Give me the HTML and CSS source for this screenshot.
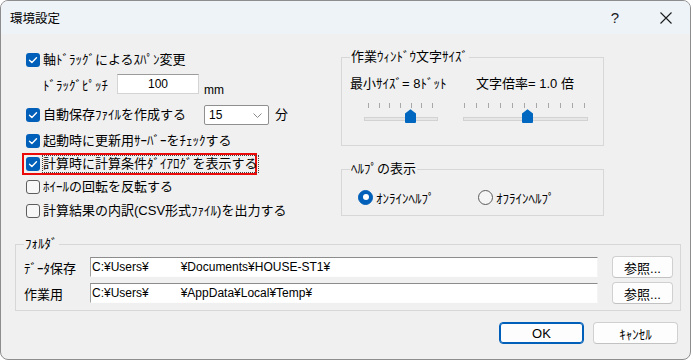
FILE: index.html
```html
<!DOCTYPE html>
<html>
    <head>
        <meta charset="utf-8">
        <link rel="stylesheet" href="styles.css">
    </head>
    <body>
        <div class="dialog">
            <div class="titlebar">
                <span class="title">環境設定</span>
                <span class="help">?</span>
                <span class="close">
                    <svg width="12" height="12" viewBox="0 0 12 12"><path d="M0.5 0.5L11.5 11.5M11.5 0.5L0.5 11.5" stroke="#1b1b1b" stroke-width="1.1" fill="none"/></svg>
                </span>
            </div>
            <div class="content">
                <div class="top">
                    <div class="options">
                        <div class="opt">
                            <span class="check on"><svg width="14" height="14" viewBox="0 0 14 14"><path d="M3.5 7.2L5.9 9.6L10.5 4.8" stroke="#fff" stroke-width="1.4" fill="none" stroke-linecap="round" stroke-linejoin="round"/></svg></span>
                            <span>軸ﾄﾞﾗｯｸﾞによるｽﾊﾟﾝ変更</span>
                        </div>
                        <div class="pitch">
                            <span class="pitch-label">ﾄﾞﾗｯｸﾞﾋﾟｯﾁ</span>
                            <span class="edit num">100</span>
                            <span class="unit">mm</span>
                        </div>
                        <div class="opt autosave">
                            <span class="check on"><svg width="14" height="14" viewBox="0 0 14 14"><path d="M3.5 7.2L5.9 9.6L10.5 4.8" stroke="#fff" stroke-width="1.4" fill="none" stroke-linecap="round" stroke-linejoin="round"/></svg></span>
                            <span class="autosave-label">自動保存ﾌｧｲﾙを作成する</span>
                            <span class="combo">15<svg width="9" height="5" viewBox="0 0 9 5"><path d="M0.5 0.5L4.5 4.5L8.5 0.5" stroke="#8a8a8a" fill="none"/></svg></span>
                            <span class="minutes">分</span>
                        </div>
                        <div class="opt update">
                            <span class="check on"><svg width="14" height="14" viewBox="0 0 14 14"><path d="M3.5 7.2L5.9 9.6L10.5 4.8" stroke="#fff" stroke-width="1.4" fill="none" stroke-linecap="round" stroke-linejoin="round"/></svg></span>
                            <span>起動時に更新用ｻｰﾊﾞｰをﾁｪｯｸする</span>
                        </div>
                        <div class="opt highlight">
                            <span class="check on"><svg width="14" height="14" viewBox="0 0 14 14"><path d="M3.5 7.2L5.9 9.6L10.5 4.8" stroke="#fff" stroke-width="1.4" fill="none" stroke-linecap="round" stroke-linejoin="round"/></svg></span>
                            <span class="focus">計算時に計算条件ﾀﾞｲｱﾛｸﾞを表示する</span>
                        </div>
                        <div class="opt wheel">
                            <span class="check"></span>
                            <span>ﾎｲｰﾙの回転を反転する</span>
                        </div>
                        <div class="opt csv">
                            <span class="check"></span>
                            <span>計算結果の内訳(CSV形式ﾌｧｲﾙ)を出力する</span>
                        </div>
                    </div>

                    <div class="side">
                        <fieldset class="group sizes">
                            <legend>作業ｳｨﾝﾄﾞｳ文字ｻｲｽﾞ</legend>
                            <div class="size-cols">
                                <div class="size-col first">
                                    <div class="size-label">最小ｻｲｽﾞ= 8ﾄﾞｯﾄ</div>
                                    <div class="slider small">
                                        <div class="ticks"><i></i><i></i><i></i><i></i><i></i><i></i><i></i></div>
                                        <div class="track"></div>
                                        <svg class="thumb" style="left:41px" width="11" height="14" viewBox="0 0 11 14"><path d="M0 4.6L5.5 0.2L11 4.6V13a1 1 0 0 1-1 1H1a1 1 0 0 1-1-1Z" fill="#0067c0"/></svg>
                                    </div>
                                </div>
                                <div class="size-col">
                                    <div class="size-label">文字倍率= 1.0 倍</div>
                                    <div class="slider wide">
                                        <div class="ticks"><i></i><i></i><i></i><i></i><i></i><i></i><i></i><i></i><i></i><i></i><i></i></div>
                                        <div class="track"></div>
                                        <svg class="thumb" style="left:59px" width="11" height="14" viewBox="0 0 11 14"><path d="M0 4.6L5.5 0.2L11 4.6V13a1 1 0 0 1-1 1H1a1 1 0 0 1-1-1Z" fill="#0067c0"/></svg>
                                    </div>
                                </div>
                            </div>
                        </fieldset>

                        <fieldset class="group helpmode">
                            <legend>ﾍﾙﾌﾟの表示</legend>
                            <div class="radios">
                                <div class="radio-item first"><span class="radio on"></span><span>ｵﾝﾗｲﾝﾍﾙﾌﾟ</span></div>
                                <div class="radio-item"><span class="radio"></span><span>ｵﾌﾗｲﾝﾍﾙﾌﾟ</span></div>
                            </div>
                        </fieldset>
                    </div>
                </div>

                <fieldset class="group folder">
                    <legend>ﾌｫﾙﾀﾞ</legend>
                    <div class="path-row">
                        <span class="path-label">ﾃﾞｰﾀ保存</span>
                        <span class="edit path">C:¥Users¥<span class="masked"></span>¥Documents¥HOUSE-ST1¥</span>
                        <button class="btn browse">参照...</button>
                    </div>
                    <div class="path-row">
                        <span class="path-label">作業用</span>
                        <span class="edit path">C:¥Users¥<span class="masked"></span>¥AppData¥Local¥Temp¥</span>
                        <button class="btn browse">参照...</button>
                    </div>
                </fieldset>

                <div class="actions">
                    <button class="btn default">OK</button>
                    <button class="btn">ｷｬﾝｾﾙ</button>
                </div>
            </div>
        </div>
    </body>
</html>
```

FILE: styles.css
```css
* {
    box-sizing: border-box;
}

body {
    margin: 0;
    background: #ffffff;
    font-family: "Liberation Sans", "Noto Sans CJK JP", sans-serif;
    font-size: 13px;
    color: #000;
}

.dialog {
    width: 691px;
    height: 360px;
    border: 1px solid #8d8d8d;
    border-radius: 8px;
    overflow: hidden;
    background: #f0f0f0;
    display: flex;
    flex-direction: column;
}

.titlebar {
    height: 33px;
    flex: none;
    background: #eef3f8;
    display: flex;
    align-items: center;
    padding: 0 18px 0 9px;
}

.title {
    font-family: "Noto Sans CJK JP", sans-serif;
    font-size: 12.5px;
    line-height: 16px;
}

.help {
    margin-left: auto;
    width: 20px;
    text-align: center;
    font-size: 15px;
    color: #1b1b1b;
}

.close {
    margin-left: 35px;
    display: flex;
}

.top {
    display: flex;
}

/* left column of check boxes */
.options {
    margin-left: 21px;
    width: 319px;
    padding-top: 16px;
}

.opt {
    display: flex;
    align-items: center;
    height: 20px;
    padding-left: 4px;
    line-height: 16px;
    white-space: nowrap;
}

.check {
    width: 14px;
    height: 14px;
    flex: none;
    margin-right: 3px;
    border-radius: 3px;
    border: 1px solid #5d5d5d;
    background: #f7f7f7;
}

.check.on {
    border: none;
    background: #005fb8;
    display: flex;
}

.pitch {
    display: flex;
    height: 20px;
    margin-top: 4px;
    padding-left: 21px;
    align-items: center;
}

.pitch-label {
    width: 74px;
}

.edit {
    background: #fff;
    height: 20px;
    line-height: 18px;
    font-size: 12px;
    white-space: nowrap;
}

.edit.num {
    width: 82px;
    text-align: center;
    border: 1px solid #d4d4d4;
    border-top-color: #9c9c9c;
}

.unit {
    align-self: flex-end;
    margin-left: 5px;
    margin-bottom: -3px;
    line-height: 14px;
    font-size: 12px;
}

.autosave {
    margin-top: 11px;
}

.autosave-label {
    width: 161px;
}

.combo {
    width: 65px;
    height: 20px;
    display: flex;
    align-items: center;
    justify-content: space-between;
    padding: 0 6px 0 4px;
    background: #fff;
    border: 1px solid #8f8f8f;
    border-radius: 2px;
    font-size: 12px;
}

.minutes {
    margin-left: 6px;
}

.update {
    margin-top: 6px;
}

.highlight {
    margin-top: 2px;
    height: 22px;
    width: 235px;
    padding-left: 2px;
    border: 2px solid #ea0a0a;
}

.focus {
    outline: 1px dotted #444;
    outline-offset: 0;
}

.wheel {
    margin-top: 2px;
}

.csv {
    margin-top: 4px;
}

/* group boxes */
.group {
    margin: 0;
    padding: 0 0 0 8px;
    border: 1px solid #d7d7d7;
    min-width: 0;
}

.group legend {
    padding: 0 1px;
    line-height: 16px;
}

.side {
    width: 263px;
}

.sizes {
    margin-top: 15px;
    padding-bottom: 24px;
}

.size-cols {
    display: flex;
}

.size-col.first {
    width: 126px;
}

.size-label {
    margin-top: 11px;
    line-height: 16px;
    white-space: nowrap;
}

.slider {
    position: relative;
    margin-top: 11px;
    height: 18px;
}

.slider.small {
    margin-left: 14px;
    width: 74px;
}

.slider.wide {
    margin-left: -13px;
    width: 125px;
}

.ticks {
    display: flex;
    justify-content: space-between;
    height: 5px;
    margin: 0 5px 0 4px;
}

.slider.wide .ticks {
    margin: 0 3px 0 1px;
}

.ticks i {
    width: 1px;
    height: 5px;
    background: #a8a8a8;
}

.track {
    margin-top: 9px;
    height: 4px;
    background: #e6e6e6;
    border: 1px solid #d2d2d2;
}

.thumb {
    position: absolute;
    top: 6px;
}

.helpmode {
    margin-top: 15px;
    padding-bottom: 10px;
}

.radios {
    display: flex;
    align-items: center;
    height: 16px;
    margin-top: 12px;
}

.radio-item {
    display: flex;
    align-items: center;
    white-space: nowrap;
}

.radio-item.first {
    margin-left: 8px;
    width: 120px;
}

.radio {
    width: 15px;
    height: 15px;
    margin-right: 3px;
    border-radius: 50%;
    border: 1px solid #5c5c5c;
    background: #f5f5f5;
    display: flex;
    align-items: center;
    justify-content: center;
}

.radio.on {
    border-color: #005fb8;
    background: #005fb8;
}

.radio.on::after {
    content: "";
    width: 6px;
    height: 6px;
    border-radius: 50%;
    background: #fff;
}

/* folder box */
.folder {
    margin: 15px 0 0 14px;
    width: 666px;
    padding-bottom: 6px;
}

.path-row {
    display: flex;
    align-items: center;
    height: 22px;
    margin-top: 4px;
}

.path-label {
    width: 66px;
}

.edit.path {
    width: 508px;
    padding-left: 1px;
    border-top: 1px solid #8c8c8c;
    border-left: 1px solid #a0a0a0;
    border-right: 1px solid #f4f4f4;
    border-bottom: 1px solid #fdfdfd;
}

.masked {
    display: inline-block;
    width: 32px;
}

.btn {
    font-family: "Liberation Sans", "Noto Sans CJK JP", sans-serif;
    font-size: 13px;
    color: #000;
    height: 22px;
    padding: 0;
    background: #fdfdfd;
    border: 1px solid #d0d0d0;
    border-bottom-color: #c2c2c2;
    border-radius: 4px;
}

.browse {
    width: 61px;
    margin-left: 14px;
}

.actions {
    display: flex;
    justify-content: flex-end;
    gap: 9px;
    margin-top: 11px;
    padding-right: 12px;
}

.actions .btn {
    width: 85px;
}

.btn.default {
    border-color: #005fb8;
    box-shadow: inset 0 0 0 1px #005fb8;
}
```
